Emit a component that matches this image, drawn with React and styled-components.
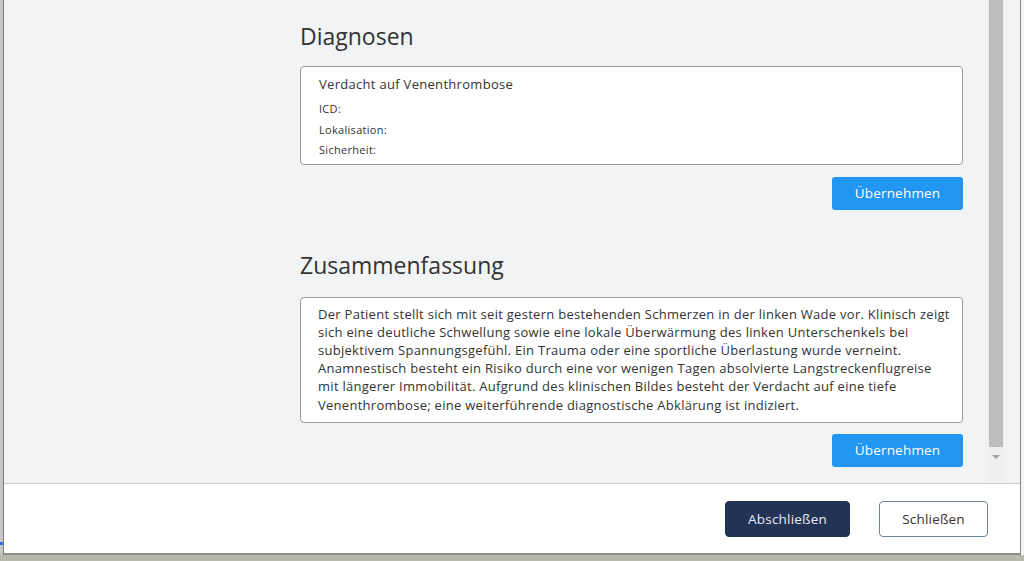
import React from 'react';
import styled, { createGlobalStyle } from 'styled-components';

const GlobalStyle = createGlobalStyle`
	html, body {
		margin: 0;
		padding: 0;
		background: #b8b8ad;
		font-family: 'Open Sans', 'Liberation Sans', sans-serif;
		color: #333;
	}
	* {
		box-sizing: border-box;
	}
`;

const Screen = styled.div`
	width: 1024px;
	height: 561px;
	display: flex;
	flex-direction: column;
	overflow: hidden;
`;

const Top = styled.div`
	display: flex;
	height: 555px;
`;

const LeftEdge = styled.div`
	width: 3px;
	background: #c6c6c6;
	position: relative;

	&::after {
		content: '';
		position: absolute;
		left: 0;
		bottom: 10px;
		width: 3px;
		height: 3px;
		background: #3a6fd8;
	}
`;

const RightEdge = styled.div`
	width: 3px;
	background: #f4f4f4;
`;

const Window = styled.div`
	flex: 1;
	display: flex;
	flex-direction: column;
	border-left: 1px solid #7c7c7c;
	border-right: 1px solid #8a8a8a;
	border-bottom: 2px solid #8e8e8e;
	background: #fff;
`;

const Desktop = styled.div`
	flex: 1;
	background: #b8b8ad;
`;

const Body = styled.div`
	height: 484px;
	display: flex;
	background: #f2f3f5;
	border-bottom: 1px solid #cacaca;
`;

const Main = styled.div`
	flex: 1;
	padding: 20px 24px 0 296px;
	display: flex;
	flex-direction: column;
`;

const Heading = styled.h2`
	margin: 0 0 ${p => p.$gap}px;
	font-size: 23px;
	line-height: 32px;
	font-weight: 400;
	color: #333;
`;

const Card = styled.div`
	background: #fff;
	border: 1px solid #9a9a9a;
	border-radius: 4px;
	padding: ${p => p.$pad};
`;

const CardTitle = styled.div`
	font-size: 13px;
	letter-spacing: 0.3px;
	line-height: 20px;
	margin-bottom: 5px;
`;

const Field = styled.div`
	font-size: 11px;
	letter-spacing: 0.3px;
	line-height: 20.5px;
`;

const Summary = styled.p`
	margin: 0;
	font-size: 13px;
	letter-spacing: 0.28px;
	line-height: 18.2px;
`;

const Actions = styled.div`
	display: flex;
	justify-content: flex-end;
	margin-top: ${p => p.$top}px;
	margin-bottom: ${p => p.$bottom}px;
`;

const PrimaryButton = styled.button`
	width: 131px;
	height: 33px;
	border: none;
	border-radius: 3px;
	background: #2196f3;
	color: #fff;
	font-family: inherit;
	font-size: 13.5px;
	letter-spacing: 0.2px;
`;

const ScrollTrack = styled.div`
	width: 17px;
	display: flex;
	flex-direction: column;
	align-items: center;
	background: #efefef;
	padding: 0 1px;
`;

const ScrollThumb = styled.div`
	width: 14px;
	height: 447px;
	background: #bdbdbd;
`;

const ScrollArrow = styled.div`
	margin-top: 8px;
	width: 0;
	height: 0;
	border-left: 4px solid transparent;
	border-right: 4px solid transparent;
	border-top: 4px solid #a3a3a3;
`;

const Gutter = styled.div`
	width: 16px;
`;

const Footer = styled.div`
	flex: 1;
	display: flex;
	justify-content: flex-end;
	align-items: flex-start;
	gap: 29px;
	padding: 17px 32px 0 0;
	background: #fff;
`;

const FooterButton = styled.button`
	width: ${p => p.$w}px;
	height: 36px;
	border-radius: 4px;
	font-family: inherit;
	font-size: 13.5px;
	letter-spacing: 0.2px;
	border: 1px solid ${p => (p.$dark ? '#223356' : '#72819a')};
	background: ${p => (p.$dark ? '#223356' : '#fff')};
	color: ${p => (p.$dark ? '#e9ecf2' : '#333')};
`;

const App = () => {
	return (
		<>
			<GlobalStyle />
			<Screen>
				<Top>
					<LeftEdge />
					<Window>
						<Body>
							<Main>
								<Heading $gap={14}>Diagnosen</Heading>
								<Card $pad="7px 18px 3px">
									<CardTitle>Verdacht auf Venenthrombose</CardTitle>
									<Field>ICD:</Field>
									<Field>Lokalisation:</Field>
									<Field>Sicherheit:</Field>
								</Card>
								<Actions $top={12} $bottom={39}>
									<PrimaryButton>Übernehmen</PrimaryButton>
								</Actions>
								<Heading $gap={16}>Zusammenfassung</Heading>
								<Card $pad="7px 12px 8px 17px">
									<Summary>
										Der Patient stellt sich mit seit gestern bestehenden Schmerzen in der linken
										Wade vor. Klinisch zeigt sich eine deutliche Schwellung sowie eine lokale
										Überwärmung des linken Unterschenkels bei subjektivem Spannungsgefühl. Ein
										Trauma oder eine sportliche Überlastung wurde verneint. Anamnestisch besteht
										ein Risiko durch eine vor wenigen Tagen absolvierte Langstreckenflugreise mit
										längerer Immobilität. Aufgrund des klinischen Bildes besteht der Verdacht auf
										eine tiefe Venenthrombose; eine weiterführende diagnostische Abklärung ist
										indiziert.
									</Summary>
								</Card>
								<Actions $top={11} $bottom={0}>
									<PrimaryButton>Übernehmen</PrimaryButton>
								</Actions>
							</Main>
							<ScrollTrack>
								<ScrollThumb />
								<ScrollArrow />
							</ScrollTrack>
							<Gutter />
						</Body>
						<Footer>
							<FooterButton $dark $w={125}>Abschließen</FooterButton>
							<FooterButton $w={109}>Schließen</FooterButton>
						</Footer>
					</Window>
					<RightEdge />
				</Top>
				<Desktop />
			</Screen>
		</>
	);
};

export default App;
